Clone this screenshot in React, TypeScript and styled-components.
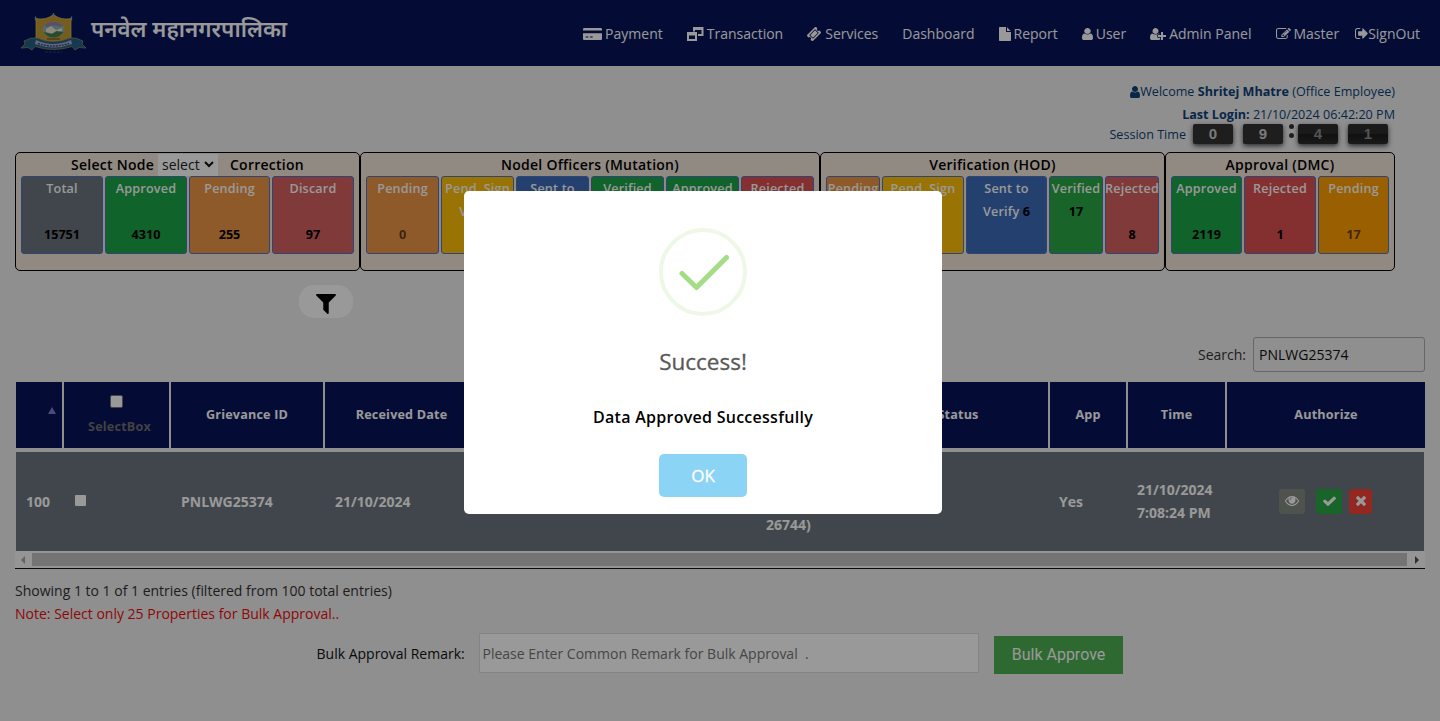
import React from "react";
import styled, { createGlobalStyle } from "styled-components";

const Global = createGlobalStyle`
  * { box-sizing: border-box; }
  html, body { margin: 0; padding: 0; }
  body { background: #eee; font-family: "Open Sans", "Noto Sans", sans-serif; font-size: 14px; line-height: 23px; color: #333; overflow: hidden; }
`;

const paths = {
  user: "M1536 1399q0 109-62.5 187t-150.5 78h-854q-88 0-150.5-78t-62.5-187q0-85 8.5-160.5t31.5-152 58.5-131 94-89 134.5-34.5q131 128 313 128t313-128q76 0 134.5 34.5t94 89 58.5 131 31.5 152 8.5 160.5zm-256-887q0 159-112.5 271.5t-271.5 112.5-271.5-112.5-112.5-271.5 112.5-271.5 271.5-112.5 271.5 112.5 112.5 271.5z",
  check: "M1671 566q0 40-28 68l-724 724-136 136q-28 28-68 28t-68-28l-136-136-362-362q-28-28-28-68t28-68l136-136q28-28 68-28t68 28l294 295 656-657q28-28 68-28t68 28l136 136q28 28 28 68z",
  times: "M1490 1322q0 40-28 68l-136 136q-28 28-68 28t-68-28l-294-294-294 294q-28 28-68 28t-68-28l-136-136q-28-28-28-68t28-68l294-294-294-294q-28-28-28-68t28-68l136-136q28-28 68-28t68 28l294 294 294-294q28-28 68-28t68 28l136 136q28 28 28 68t-28 68l-294 294 294 294q28 28 28 68z",
  eye: "M1664 960q-152-236-381-353 61 104 61 225 0 185-131.5 316.5t-316.5 131.5-316.5-131.5-131.5-316.5q0-121 61-225-229 117-381 353 133 205 333.5 326.5t434.5 121.5 434.5-121.5 333.5-326.5zm-720-384q0-20-14-34t-34-14q-125 0-214.5 89.5t-89.5 214.5q0 20 14 34t34 14 34-14 14-34q0-86 61-147t147-61q20 0 34-14t14-34zm848 384q0 34-20 69-140 230-376.5 368.5t-499.5 138.5-499.5-139-376.5-368q-20-35-20-69t20-69q140-229 376.5-368t499.5-139 499.5 139 376.5 368q20 35 20 69z",
  signOut: "M704 1440q0 4 1 20t.5 26.5-3 23.5-10 19.5-20.5 6.5h-320q-119 0-203.5-84.5t-84.5-203.5v-704q0-119 84.5-203.5t203.5-84.5h320q13 0 22.5 9.5t9.5 22.5q0 4 1 20t.5 26.5-3 23.5-10 19.5-20.5 6.5h-320q-66 0-113 47t-47 113v704q0 66 47 113t113 47h312l11.5 1 11.5 3 8 5.5 7 9 2 13.5zm928-544q0 26-19 45l-544 544q-19 19-45 19t-45-19-19-45v-288h-448q-26 0-45-19t-19-45v-384q0-26 19-45t45-19h448v-288q0-26 19-45t45-19 45 19l544 544q19 19 19 45z",
  edit: "M888 1184l116-116-152-152-116 116v56h96v96h56zm440-720q-16-16-33 1l-350 350q-17 17-1 33t33-1l350-350q17-17 1-33zm80 594v190q0 119-84.5 203.5t-203.5 84.5h-832q-119 0-203.5-84.5t-84.5-203.5v-832q0-119 84.5-203.5t203.5-84.5h832q63 0 117 25 15 7 18 23 3 17-9 29l-49 49q-14 14-32 8-23-6-45-6h-832q-66 0-113 47t-47 113v832q0 66 47 113t113 47h832q66 0 113-47t47-113v-126q0-13 9-22l64-64q15-15 35-7t20 29zm-96-738l288 288-672 672h-288v-288zm444 132l-92 92-288-288 92-92q28-28 68-28t68 28l152 152q28 28 28 68t-28 68z",
  filter: "M1595 295q17 41-14 70l-493 493v742q0 42-39 59-13 5-25 5-27 0-45-19l-256-256q-19-19-19-45v-486l-493-493q-31-29-14-70 17-39 59-39h1280q42 0 59 39z",
  file: "M1152 512v-472q22 14 36 28l408 408q14 14 28 36h-472zm-128 32q0 40 28 68t68 28h544v1056q0 40-28 68t-68 28h-1344q-40 0-68-28t-28-68v-1600q0-40 28-68t68-28h800v544z",
  ticket: "M1024 452l316 316-572 572-316-316zm-211 979l618-618q19-19 19-45t-19-45l-362-362q-18-18-45-18t-45 18l-618 618q-19 19-19 45t19 45l362 362q18 18 45 18t45-18zm889-637l-907 908q-37 37-90.5 37t-90.5-37l-126-126q56-56 56-136t-56-136-136-56-136 56l-125-126q-37-37-37-90.5t37-90.5l907-906q37-37 90.5-37t90.5 37l125 125q-56 56-56 136t56 136 136 56 136-56l126 125q37 37 37 90.5t-37 90.5z",
  userPlus: "M704 896q-159 0-271.5-112.5t-112.5-271.5 112.5-271.5 271.5-112.5 271.5 112.5 112.5 271.5-112.5 271.5-271.5 112.5zm960 128h352q13 0 22.5 9.5t9.5 22.5v192q0 13-9.5 22.5t-22.5 9.5h-352v352q0 13-9.5 22.5t-22.5 9.5h-192q-13 0-22.5-9.5t-9.5-22.5v-352h-352q-13 0-22.5-9.5t-9.5-22.5v-192q0-13 9.5-22.5t22.5-9.5h352v-352q0-13 9.5-22.5t22.5-9.5h192q13 0 22.5 9.5t9.5 22.5v352zm-736 224q0 52 38 90t90 38h256v238q-68 50-171 50h-874q-121 0-194-69t-73-190q0-53 3.5-103.5t14-109 26.5-108.5 43-97.5 62-81 85.5-53.5 111.5-20q19 0 39 17 79 61 154.5 91.5t164.5 30.5 164.5-30.5 154.5-91.5q20-17 39-17 132 0 217 96h-223q-52 0-90 38t-38 90v192z",
  card: "M0 1696v-880h2304v720q0 66-47 113t-113 47h-1984q-66 0-113-47t-47-113zm840-450v128h340v-128zm-530 0v128h340v-128zM2144 128q66 0 113 47t47 113v164h-2304v-164q0-66 47-113t113-47z",
};

type GlyphName = keyof typeof paths;
interface GlyphProps { name: GlyphName; box: string; w: number; h: number; }
const GlyphSvg = styled.svg`
  display: block;
  flex: none;
  fill: currentColor;
  fill-rule: evenodd;
`;
const Glyph = ({ name, box, w, h }: GlyphProps) => (
  <GlyphSvg viewBox={box} width={w} height={h} preserveAspectRatio="none"><path d={paths[name]} /></GlyphSvg>
);
const WindowsGlyph = () => (
  <GlyphSvg viewBox="0 0 17 14" width="17" height="14">
    <path d="M6 0h10.500v9h-5.500v-2h3.500v-4h-6.500v1.500h-2z M0 5h10v9h-10z M2 8.500v3.500h6v-3.500z" />
  </GlyphSvg>
);

const Page = styled.div`
  height: 721px;
  display: flex;
  flex-direction: column;
  overflow: hidden;
`;

const Header = styled.header`
  height: 66px;
  flex: none;
  background: #07145a;
  color: #fff;
  display: flex;
  align-items: flex-start;
  justify-content: space-between;
  padding: 0 20px;
`;
const Brand = styled.div`
  display: flex;
  gap: 4px;
  padding-top: 11px;
  svg { display: block; }
`;
const BrandName = styled.span`
  font-family: "Noto Sans", "Noto Sans Devanagari", sans-serif;
  font-size: 22.3px;
  font-weight: 600;
  line-height: 36px;
  white-space: nowrap;
`;
const Nav = styled.nav`
  display: flex;
  gap: 24px;
  padding-top: 22px;
`;
const NavItem = styled.a<{ $gap?: number; $pull?: number }>`
  display: flex;
  align-items: center;
  gap: ${(p) => p.$gap ?? 3}px;
  margin-left: ${(p) => p.$pull ?? 0}px;
  white-space: nowrap;
`;

const Session = styled.section`
  height: 86px;
  flex: none;
  padding: 14px 45px 0 0;
  display: flex;
  flex-direction: column;
  align-items: flex-end;
  font-size: 12.6px;
  color: #0c4278;
`;
const SessionLine = styled.div`
  display: flex;
  align-items: center;
  height: 23px;
  white-space: pre;
`;
const Clock = styled.div`
  display: flex;
  align-items: flex-start;
  height: 22px;
  margin-top: -3px;
  padding-right: 7px;
`;
const ClockLabel = styled.span`
  margin-right: 7px;
`;
const Digit = styled.span<{ $dim?: boolean; $ml?: number }>`
  width: 40px;
  height: 20px;
  margin: 1px 0 0 ${(p) => p.$ml ?? 0}px;
  border-radius: 2px;
  background: ${(p) => (p.$dim ? "linear-gradient(#2c2c2c 0 48%, #1c1c1c 52%, #2c2c2c)" : "#333")};
  box-shadow: 0 2px 5px rgba(0, 0, 0, 0.7);
  color: ${(p) => (p.$dim ? "#8c8c8c" : "#ccc")};
  font: bold 15px/20px "Liberation Sans", sans-serif;
  text-align: center;
`;
const Colon = styled.span`
  display: flex;
  flex-direction: column;
  gap: 4px;
  width: 5px;
  margin: 1px 4px 0 6px;
  &::before, &::after { content: ""; width: 5px; height: 5px; border-radius: 50%; background: #323232; }
`;

const Groups = styled.section`
  display: flex;
  height: 119px;
  flex: none;
  margin-left: 15px;
`;
const Group = styled.div<{ $w: number }>`
  width: ${(p) => p.$w}px;
  height: 119px;
  border: 1px solid #000;
  border-radius: 5px;
  background: #f2e6db;
  padding: 0 5px;
`;
const GroupTitle = styled.div`
  height: 23px;
  display: flex;
  align-items: center;
  justify-content: center;
  font-weight: 600;
  letter-spacing: 0.25px;
  color: #000;
  white-space: pre;
`;
const NodeSelect = styled.span`
  display: flex;
  align-items: center;
  gap: 4px;
  height: 22px;
  width: 60px;
  margin: 0 12px 0 4px;
  padding-left: 4px;
  background: #fff;
  font-weight: 400;
  letter-spacing: 0;
  color: #222;
`;
const Tiles = styled.div`
  display: flex;
  gap: 2px;
`;
const Tile = styled.div<{ $w: number; $bg: string }>`
  width: ${(p) => p.$w}px;
  height: 78px;
  border: 1px solid #4d74c4;
  border-radius: 3px;
  background: ${(p) => p.$bg};
  color: #fff;
  font-size: 12.6px;
  font-weight: 600;
  letter-spacing: 0.18px;
  text-align: center;
  display: flex;
  flex-direction: column;
  align-items: center;
  white-space: pre;
`;
const Count = styled.span<{ $faded?: boolean }>`
  color: ${(p) => (p.$faded ? "rgba(0,0,0,.62)" : "#000")};
  font-weight: 700;
  letter-spacing: 0;
`;

const Tools = styled.section`
  height: 111px;
  flex: none;
  display: flex;
  justify-content: space-between;
  padding: 14px 15px 0 299px;
`;
const FilterButton = styled.button`
  width: 54px;
  height: 33px;
  border: 0;
  border-radius: 15px;
  background: #fff;
  color: #000;
  display: flex;
  align-items: center;
  justify-content: center;
  padding: 4px 0 0;
`;
const Search = styled.label`
  display: flex;
  align-items: center;
  gap: 7px;
  height: 35px;
  margin-top: 52px;
`;
const SearchBox = styled.span`
  width: 172px;
  height: 35px;
  border: 1px solid #aaa;
  border-radius: 3px;
  padding: 5px;
  color: #111;
`;

const cols = "46px 105px 152px 145px 576px 76px 97px 198px";
const Table = styled.section`
  margin: 0 15px;
  height: 187px;
  flex: none;
  border-bottom: 1px solid #111;
`;
const HeadRow = styled.div`
  display: grid;
  grid-template-columns: ${cols};
  column-gap: 2px;
  height: 66px;
  margin-left: 1px;
`;
const HeadCell = styled.div<{ $shift?: number; $drop?: number }>`
  background: #07145a;
  color: #fff;
  font-size: 12.6px;
  font-weight: 700;
  letter-spacing: 0.18px;
  display: flex;
  flex-direction: column;
  align-items: center;
  justify-content: center;
  padding: ${(p) => p.$drop ?? 0}px 0 1px ${(p) => p.$shift ?? 0}px;
`;
const SortMark = styled.span`
  border: 4px solid transparent;
  border-top: 0;
  border-bottom: 7px solid #7c7cd0;
  margin: -8px 0 0 25px;
`;
const Muted = styled.span`
  color: #6e6e6e;
  padding: 7px 0 0 6px;
`;
const Check = styled.span<{ $size: number }>`
  width: ${(p) => p.$size}px;
  height: ${(p) => p.$size}px;
  background: #fff;
  border: 1px solid #767676;
  border-radius: 2px;
`;
const DataRow = styled.div`
  display: grid;
  grid-template-columns: ${cols};
  column-gap: 2px;
  height: 99px;
  margin: 4px 1px 0;
  background: #6c757d;
  color: #fff;
  font-weight: 700;
  overflow: hidden;
`;
const Cell = styled.div<{ $pl?: number; $pb?: number }>`
  display: flex;
  align-items: center;
  padding: 0 0 ${(p) => p.$pb ?? 1}px ${(p) => p.$pl ?? 10}px;
`;
const StatusCell = styled(Cell)`
  align-items: flex-end;
  padding: 0 0 15px 294px;
`;
const Action = styled.span<{ $bg: string; $w: number; $ml?: number }>`
  width: ${(p) => p.$w}px;
  height: 25px;
  margin-left: ${(p) => p.$ml ?? 0}px;
  border-radius: 3px;
  background: ${(p) => p.$bg};
  display: flex;
  align-items: center;
  justify-content: center;
`;
const Scrollbar = styled.div`
  height: 17px;
  display: flex;
  align-items: center;
  background: #f8f8f8;
`;
const Arrow = styled.span<{ $right?: boolean }>`
  width: ${(p) => (p.$right ? 18 : 17)}px;
  display: flex;
  justify-content: center;
  &::before {
    content: "";
    border: 4px solid transparent;
    ${(p) => (p.$right ? "border-left-color:#505050;border-right:0;margin-left:2px;" : "border-right-color:#a3a3a3;border-left:0;margin-right:1px;")}
  }
`;
const Thumb = styled.span`
  flex: 1;
  height: 13px;
  background: #c1c1c1;
`;

const Info = styled.div`
  padding: 10px 15px 0;
  height: 56px;
  flex: none;
`;
const Note = styled.div`
  color: #f00c0c;
`;
const Bulk = styled.section`
  display: flex;
  align-items: flex-start;
  padding: 8px 0 0 316.5px;
  color: #111;
`;
const RemarkLabel = styled.label`
  width: 162.5px;
  padding-top: 9px;
  white-space: nowrap;
`;
const Remark = styled.div`
  width: 500px;
  height: 40px;
  border: 1px solid #dcdcdc;
  background: #fff;
  padding: 8px 2.5px;
  color: #757575;
  white-space: pre;
`;
const BulkButton = styled.button`
  width: 129px;
  height: 38px;
  margin: 3px 0 0 15px;
  border: 0;
  background: #4caf50;
  color: #fff;
  font: 400 16px/36px Roboto, sans-serif;
`;

const Overlay = styled.div`
  position: fixed;
  inset: 0;
  background: rgba(0, 0, 0, 0.4);
`;
const Modal = styled.div`
  position: absolute;
  left: 464px;
  top: 191px;
  width: 478px;
  height: 323px;
  border-radius: 5px;
  background: #fff;
  display: flex;
  flex-direction: column;
  align-items: center;
  padding-top: 37px;
`;
const ModalTitle = styled.h2`
  margin: 29px 0 0;
  font-size: 22.5px;
  font-weight: 500;
  line-height: 34px;
  color: #595959;
  -webkit-text-stroke: 0.3px #595959;
`;
const ModalText = styled.p`
  margin: 26px 0 0;
  font-size: 16px;
  font-weight: 600;
  line-height: 24px;
  letter-spacing: 0.27px;
  color: #000;
`;
const OkButton = styled.button`
  width: 88px;
  height: 43px;
  margin-top: 25px;
  border: 0;
  border-radius: 5px;
  background: #8cd4f5;
  color: #fff;
  font: 500 17px/23px "Open Sans", sans-serif;
  -webkit-text-stroke: 0.3px #fff;
`;

const Crest = () => (
  <svg width="67" height="44" viewBox="0 0 67 44">
    <path d="M16 7.500q10 2 17.500-4q7.500 6 17.500 4v20.500q-1 3-5 4.500q-7 2-12.500 3.500q-5.500-1.500-12.500-3.500q-4-1.500-5-4.500z" fill="#c49b33" stroke="#e8c657" strokeWidth=".7" />
    <path d="M15.500 5.500v4M33.500 2v4M51.500 5.500v4" stroke="#68a4b8" strokeWidth="1.300" />
    <ellipse cx="33.500" cy="18.500" rx="11" ry="8" fill="#8eb1b5" />
    <path d="M24 14q9-7 19 0l-3 2q-6-3-13 0z" fill="#9b83a9" />
    <path d="M26 18l5-3 5 4 6-2v3l-8 3-8-2z" fill="#e8e7cf" />
    <path d="M23.500 21l8 2 5-3 7 1q-4 5.500-10 5.500t-10-5.500z" fill="#437d4b" />
    <path d="M27 28h13" stroke="#5e4a1c" strokeWidth="1" />
    <path d="M1 37l4-4-1-3q7-4 13-3q16 7 33 0q6-1 13 3l-1 3 4 4-7-.500-4 2.500-3-3.500q-18 6-37 0l-3 3.500-4-2.500z" fill="#235f86" stroke="#9a9458" strokeWidth=".7" />
    <path d="M16 29q17 8 35 0l1 4q-18 7-37 0z" fill="#a9adc8" />
    <path d="M18 32.500q15 5 31 0" stroke="#3c3d76" strokeWidth="1.400" strokeDasharray="2 1" fill="none" />
    <path d="M25 41h17" stroke="#3a3a5c" strokeWidth="1" strokeDasharray="3 1" />
  </svg>
);

const tile = {
  grey: "#6c757d", green: "#1ca546", orange: "#ef9646", red: "#d5615f",
  yellow: "#ffc107", blue: "#3c6cba", green2: "#28a745", red2: "#dc5150", amber: "#ff9f00",
};

interface TileData { w: number; bg: string; lines: string[]; count?: string; faded?: boolean; inline?: string; }
const groups: { w: number; title?: string; tiles: TileData[] }[] = [
  { w: 345, tiles: [
    { w: 82, bg: tile.grey, lines: ["Total", " "], count: "15751" },
    { w: 82, bg: tile.green, lines: ["Approved", " "], count: "4310" },
    { w: 81, bg: tile.orange, lines: ["Pending", " "], count: "255" },
    { w: 82, bg: tile.red, lines: ["Discard", " "], count: "97" } ] },
  { w: 460, title: "Nodel Officers (Mutation)", tiles: [
    { w: 73, bg: tile.orange, lines: ["Pending", " "], count: "0", faded: true },
    { w: 73, bg: tile.yellow, lines: ["Pend. Sign", "Verify"] },
    { w: 73, bg: tile.blue, lines: ["Sent to"] },
    { w: 73, bg: tile.green, lines: ["Verified"] },
    { w: 73, bg: tile.green, lines: ["Approved"] },
    { w: 73, bg: tile.red2, lines: ["Rejected"] } ] },
  { w: 345, title: "Verification (HOD)", tiles: [
    { w: 54, bg: tile.orange, lines: ["Pending"] },
    { w: 82, bg: tile.yellow, lines: ["Pend. Sign"] },
    { w: 81, bg: tile.blue, lines: ["Sent to"], inline: "6" },
    { w: 54, bg: tile.green2, lines: ["Verified"], count: "17" },
    { w: 54, bg: tile.red, lines: ["Rejected", " "], count: "8" } ] },
  { w: 230, title: "Approval (DMC)", tiles: [
    { w: 71, bg: tile.green, lines: ["Approved", " "], count: "2119" },
    { w: 72, bg: tile.red2, lines: ["Rejected", " "], count: "1" },
    { w: 71, bg: tile.amber, lines: ["Pending", " "], count: "17", faded: true } ] },
];

export default function App() {
  return (
    <>
      <Global />
      <Page>
        <Header>
          <Brand><Crest /><BrandName>पनवेल महानगरपालिका</BrandName></Brand>
          <Nav>
            <NavItem><Glyph name="card" box="0 128 2304 1568" w={19} h={12} />Payment</NavItem>
            <NavItem><WindowsGlyph />Transaction</NavItem>
            <NavItem $gap={4}><Glyph name="ticket" box="50 50 1692 1692" w={14} h={14} />Services</NavItem>
            <NavItem>Dashboard</NavItem>
            <NavItem><Glyph name="file" box="128 0 1536 1792" w={12} h={14} />Report</NavItem>
            <NavItem><Glyph name="user" box="256 128 1280 1536" w={11} h={12} />User</NavItem>
            <NavItem><Glyph name="userPlus" box="0 128 2048 1536" w={16} h={12} />Admin Panel</NavItem>
            <NavItem><Glyph name="edit" box="0 128 1792 1536" w={15} h={12} />Master</NavItem>
            <NavItem $gap={0} $pull={-8}><Glyph name="signOut" box="64 256 1600 1280" w={13} h={11} />SignOut</NavItem>
          </Nav>
        </Header>

        <Session>
          <SessionLine><Glyph name="user" box="256 128 1280 1536" w={10} h={12} />Welcome <b>Shritej Mhatre</b> (Office Employee)</SessionLine>
          <SessionLine><b>Last Login:</b> 21/10/2024 06:42:20 PM</SessionLine>
          <Clock>
            <ClockLabel>Session Time</ClockLabel>
            <Digit>0</Digit><Digit $ml={10}>9</Digit><Colon />
            <Digit $dim>4</Digit><Digit $dim $ml={10}>1</Digit>
          </Clock>
        </Session>

        <Groups>
          {groups.map((g, i) => (
            <Group key={i} $w={g.w}>
              <GroupTitle>
                {g.title ?? (<>
                  Select Node
                  <NodeSelect>select
                    <svg width="10" height="7" viewBox="0 0 10 7"><path d="M1 1l4 4 4-4" fill="none" stroke="#111" strokeWidth="2" /></svg>
                  </NodeSelect>
                  Correction
                </>)}
              </GroupTitle>
              <Tiles>
                {g.tiles.map((t, j) => (
                  <Tile key={j} $w={t.w} $bg={t.bg}>
                    {t.lines.map((l, k) => <span key={k}>{l}</span>)}
                    {t.inline && <span>Verify <Count>{t.inline}</Count></span>}
                    {t.count && <Count $faded={t.faded}>{t.count}</Count>}
                  </Tile>
                ))}
              </Tiles>
            </Group>
          ))}
        </Groups>

        <Tools>
          <FilterButton><Glyph name="filter" box="192 256 1408 1408" w={20} h={20} /></FilterButton>
          <Search>Search:<SearchBox>PNLWG25374</SearchBox></Search>
        </Tools>

        <Table>
          <HeadRow>
            <HeadCell><SortMark /></HeadCell>
            <HeadCell $drop={4}><Check $size={13} /><Muted>SelectBox</Muted></HeadCell>
            <HeadCell>Grievance ID</HeadCell>
            <HeadCell $shift={8}>Received Date</HeadCell>
            <HeadCell $shift={396}>Status</HeadCell>
            <HeadCell>App</HeadCell>
            <HeadCell>Time</HeadCell>
            <HeadCell>Authorize</HeadCell>
          </HeadRow>
          <DataRow>
            <Cell>100</Cell>
            <Cell $pb={3}><Check $size={13} /></Cell>
            <Cell>PNLWG25374</Cell>
            <Cell>21/10/2024</Cell>
            <StatusCell>26744)</StatusCell>
            <Cell $pl={9}>Yes</Cell>
            <Cell $pl={9}>21/10/2024<br />7:08:24 PM</Cell>
            <Cell $pl={52}>
              <Action $bg="#838a83" $w={26}><Glyph name="eye" box="0 384 1792 1152" w={14} h={10} /></Action>
              <Action $bg="#28a745" $w={26} $ml={11}><Glyph name="check" box="121 270 1550 1252" w={13} h={10} /></Action>
              <Action $bg="#f44336" $w={23} $ml={7}><Glyph name="times" box="302 366 1188 1188" w={10} h={10} /></Action>
            </Cell>
          </DataRow>
          <Scrollbar><Arrow /><Thumb /><Arrow $right /></Scrollbar>
        </Table>

        <Info>
          <div>Showing 1 to 1 of 1 entries (filtered from 100 total entries)</div>
          <Note>Note: Select only 25 Properties for Bulk Approval..</Note>
        </Info>
        <Bulk>
          <RemarkLabel>Bulk Approval Remark:</RemarkLabel>
          <Remark>Please Enter Common Remark for Bulk Approval  .</Remark>
          <BulkButton>Bulk Approve</BulkButton>
        </Bulk>
      </Page>

      <Overlay>
        <Modal>
          <svg width="88" height="88" viewBox="0 0 88 88">
            <circle cx="44" cy="44" r="42" fill="none" stroke="#edf8e7" strokeWidth="4" />
            <path d="M23 45.500L37.500 59.500L67.500 29.500" fill="none" stroke="#a5dc86" strokeWidth="5" strokeLinecap="round" strokeLinejoin="round" />
          </svg>
          <ModalTitle>Success!</ModalTitle>
          <ModalText>Data Approved Successfully</ModalText>
          <OkButton>OK</OkButton>
        </Modal>
      </Overlay>
    </>
  );
}
